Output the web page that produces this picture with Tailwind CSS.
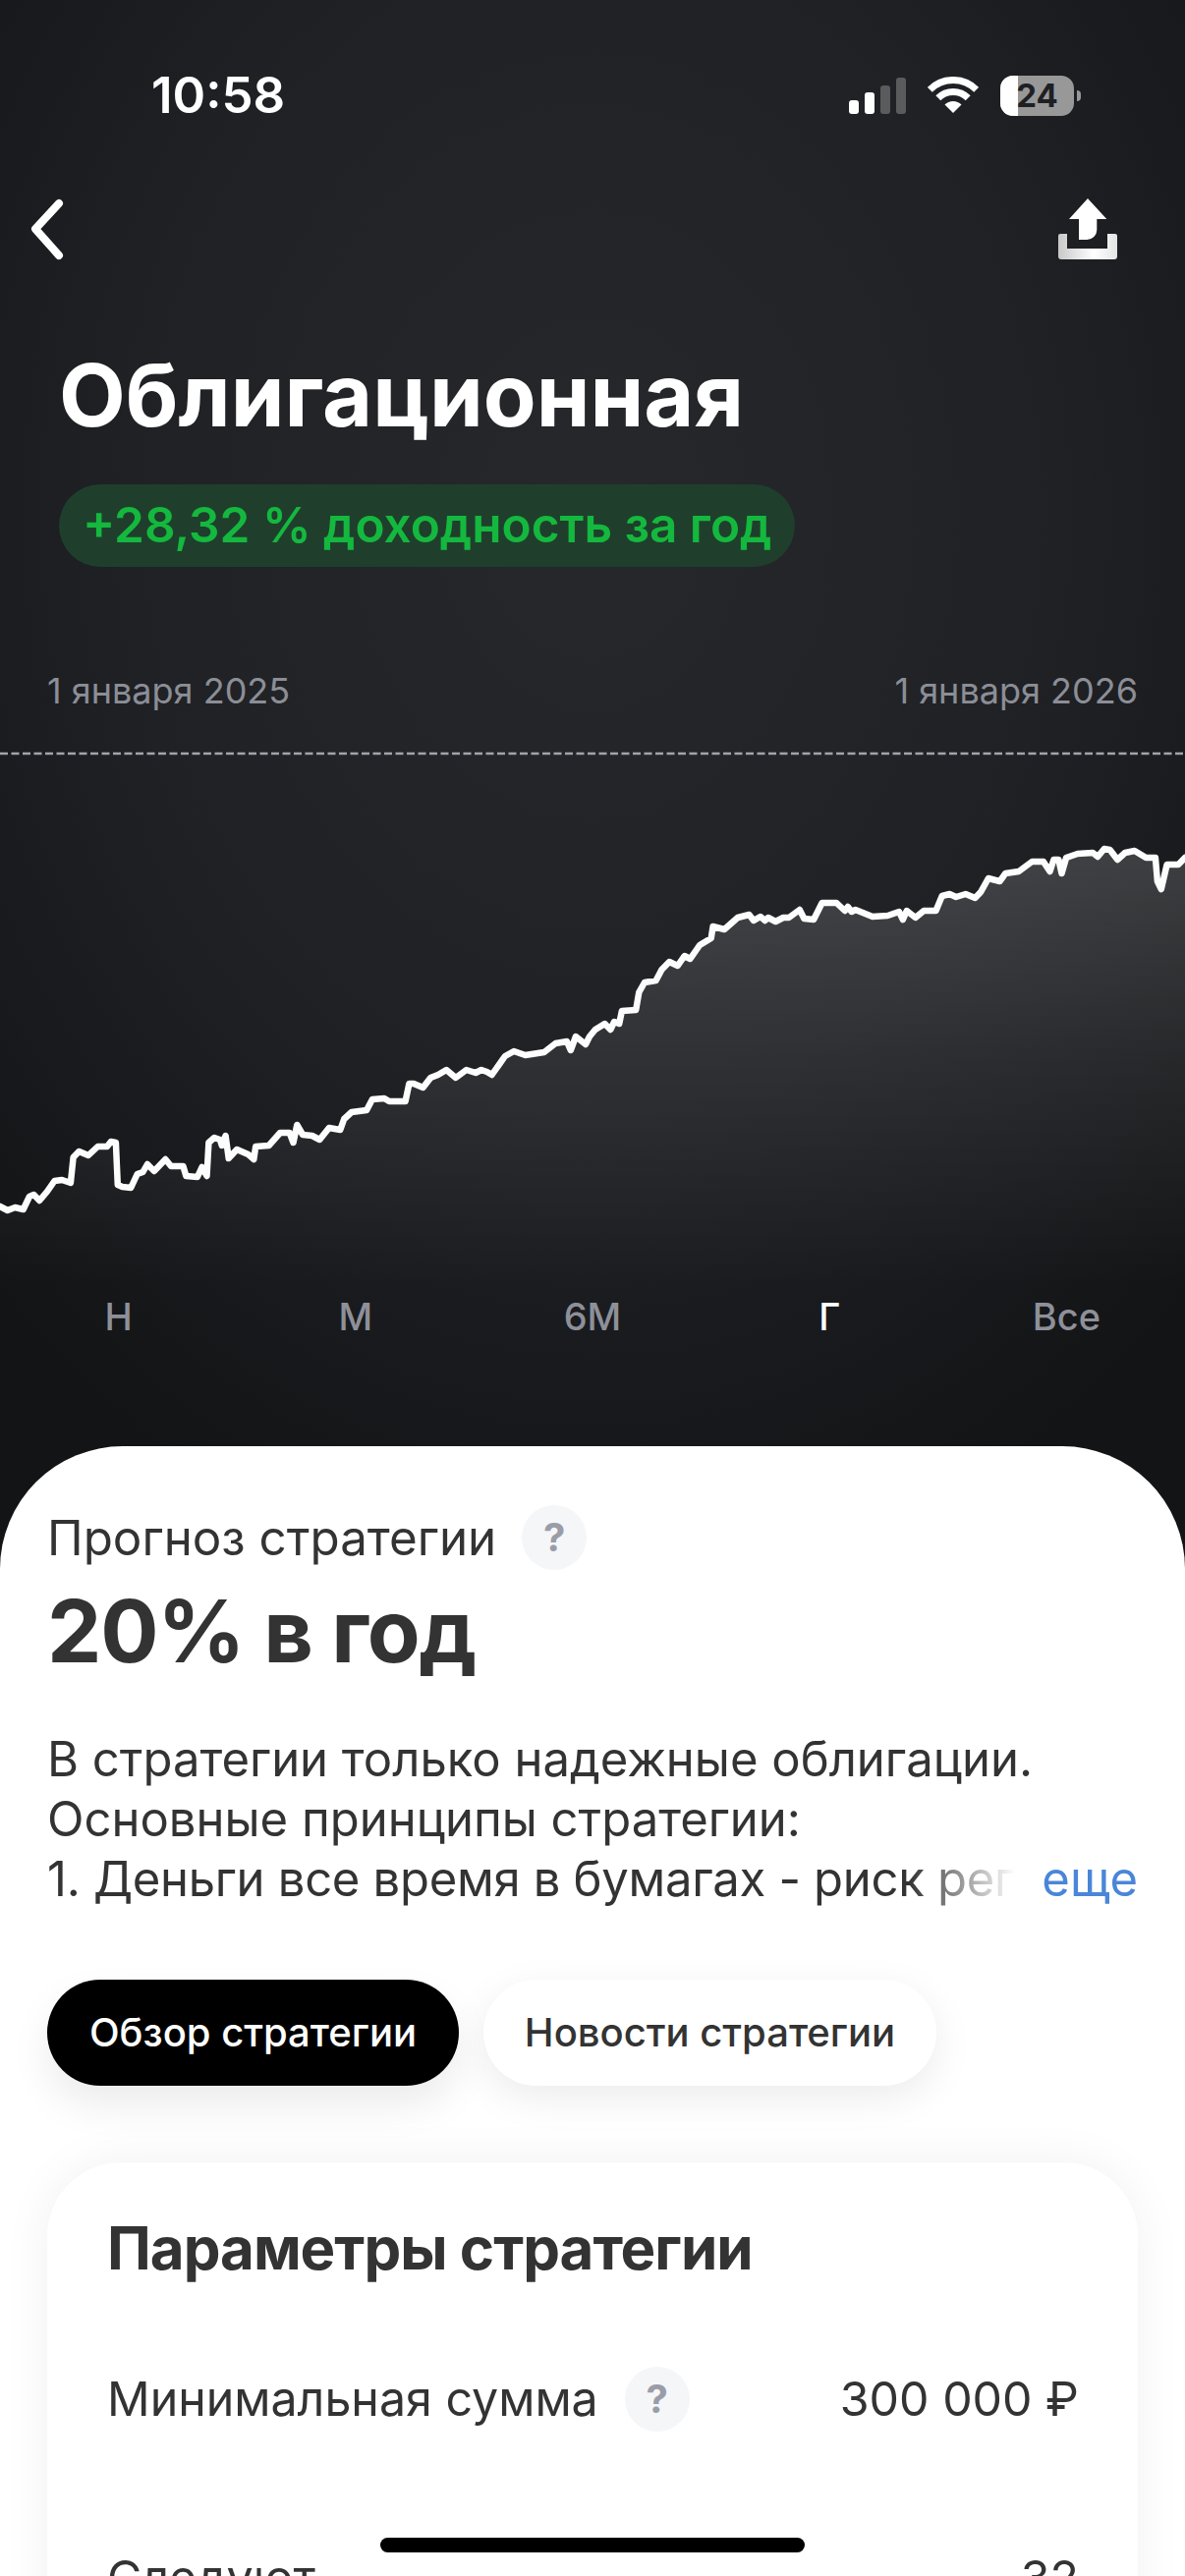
<!DOCTYPE html>
<html lang="ru">
<head>
<meta charset="utf-8">
<script src="https://cdn.jsdelivr.net/npm/@tailwindcss/browser@4"></script>
</head>
<body class="m-0">
<div class="relative w-[1206px] h-[2622px] overflow-hidden flex flex-col font-['Inter',sans-serif] bg-[radial-gradient(ellipse_72%_42%_at_50%_20%,#26282c_0%,#1f2125_55%,#131416_100%)]">

  <div class="flex items-center justify-between h-[54px] mt-[70px] pl-[154px] pr-[106px] shrink-0">
    <span class="text-white text-[51px] leading-[54px] font-semibold">10:58</span>
    <div class="flex items-center gap-[22px]">
      <div class="flex items-end gap-[6px] h-[37px]">
        <div class="w-[10px] h-[14px] rounded-[3px] bg-white"></div>
        <div class="w-[10px] h-[22px] rounded-[3px] bg-white"></div>
        <div class="w-[10px] h-[29px] rounded-[3px] bg-[#5a5b5d]"></div>
        <div class="w-[10px] h-[37px] rounded-[3px] bg-[#5a5b5d]"></div>
      </div>
      <svg width="52" height="38" viewBox="0 0 52 38" fill="none">
        <path d="M2.3 13.3A33.5 33.5 0 0 1 49.7 13.3" stroke="#fff" stroke-width="7"/>
        <path d="M10.8 21.8A21.5 21.5 0 0 1 41.2 21.8" stroke="#fff" stroke-width="7"/>
        <path d="M26 37L17.5 28.5A12 12 0 0 1 34.5 28.5Z" fill="#fff"/>
      </svg>
      <div class="flex items-center gap-[3px]">
        <div class="relative w-[75px] h-[41px] rounded-[13px] overflow-hidden flex bg-[#989898]">
          <div class="w-[18px] h-full bg-white"></div>
          <span class="absolute inset-0 flex items-center justify-center text-[33px] leading-none font-bold text-[#1e2024]">24</span>
        </div>
        <div class="w-[4px] h-[11px] rounded-r-[4px] bg-[#989898]"></div>
      </div>
    </div>
  </div>

  <div class="flex items-center justify-between h-[64px] mt-[77px] pl-[28px] pr-[68px] shrink-0">
    <svg width="40" height="64" viewBox="0 0 40 64" fill="none">
      <path d="M32 6L8 32L32 59" stroke="#fff" stroke-width="8" stroke-linecap="round" stroke-linejoin="round"/>
    </svg>
    <svg width="62" height="62" viewBox="0 0 62 62">
      <defs><linearGradient id="tray" x1="0" y1="0" x2="1" y2="0"><stop offset="0" stop-color="#c8c8c8"/><stop offset="0.6" stop-color="#ffffff"/><stop offset="1" stop-color="#e4e4e4"/></linearGradient></defs>
      <path d="M1 38a2 2 0 0 1 2-2h7v15h41V36h8a2 2 0 0 1 2 2v21a3 3 0 0 1-3 3H4a3 3 0 0 1-3-3Z" fill="url(#tray)"/>
      <path d="M31 0L50.300 21H40.300V32a10 10 0 0 1-10 10H22V21H12Z" fill="#fff"/>
    </svg>
  </div>

  <h1 class="mt-[87px] pl-[60px] text-[88px] leading-[100px] font-bold text-white shrink-0">Облигационная</h1>

  <div class="mt-[41px] ml-[60px] h-[84px] w-fit px-[24px] rounded-full bg-[#1f3f2c] flex items-center shrink-0">
    <span class="text-[49.500px] leading-none font-semibold text-[#14b83e] whitespace-nowrap">+28,32 % доходность за год</span>
  </div>

  <div class="mt-[102px] flex justify-between px-[48px] text-[36px] leading-[48px] text-[#8c8e96] shrink-0">
    <span>1 января 2025</span>
    <span>1 января 2026</span>
  </div>

  <svg class="block mt-[33px] shrink-0" width="1206" height="555" viewBox="0 760 1206 555" fill="none">
    <defs>
      <linearGradient id="area" gradientUnits="userSpaceOnUse" x1="0" y1="880" x2="0" y2="1310">
        <stop offset="0" stop-color="#ffffff" stop-opacity="0.15"/>
        <stop offset="0.45" stop-color="#ffffff" stop-opacity="0.07"/>
        <stop offset="1" stop-color="#ffffff" stop-opacity="0"/>
      </linearGradient>
    </defs>
    <line x1="0" y1="767" x2="1206" y2="767" stroke="#a2a4ac" stroke-width="2.500" stroke-dasharray="8 3.500"/>
    <path fill="url(#area)" d="M0 1228L7.700 1232L15.300 1229L23.700 1231L29.900 1218L34.400 1216L40.200 1222L47.800 1213L55.500 1202L63.100 1201L71.900 1204L74.600 1178L80.400 1172L89.900 1176L99.500 1167L109 1167L112.900 1162L117.900 1163L119.800 1206L124.400 1208L133.200 1209L139.700 1195L145.400 1193L150 1185L156.900 1192L168.400 1180L174.100 1187L179.900 1187L186.400 1187L189.400 1197L200.900 1198L205.500 1188L210.500 1197L212.400 1163L218.100 1158L223.900 1160L225.800 1166L229.600 1156L232.700 1179L241.100 1170L252.600 1175L258.300 1180L260.200 1167L273.600 1166L285.100 1153L294.700 1153L298.500 1163L302.300 1145L308.100 1155L317.600 1156L325.300 1160L334.900 1148L346.300 1150L350.200 1139L357.800 1132L373.100 1130L378.900 1119L391.100 1118L396.100 1121L412.600 1121L416.400 1103L421 1103L430.500 1107L438.200 1097L445.800 1094L454.300 1089L463.800 1097L474.600 1089L484.100 1092L489.900 1089L495.600 1091L500.600 1094L514 1075L523 1070L534.600 1074L553.800 1071L565.400 1062L576.900 1060L580.800 1069L586 1055L596 1063L600 1055L605.800 1048L615.500 1042L621.300 1048L625.100 1040L630.200 1042L632.900 1029L647.200 1028L650.300 1010L656 1000L667.600 998L673.400 987L681.200 979L689.700 983L696.600 973L702.400 976L712.100 962L723.700 955L725.600 943L737.200 946L750.800 934L762.400 931L767 937L773.900 933L778.600 937L781.700 934L789.400 938L797.100 934L802.900 934L813.800 926L818.400 935L828.100 936L836.600 919L851.300 919L859.800 927L862.900 923L866.700 928L870.600 926L888 933L903.400 932L915 928L918.900 936L922.800 927L931.700 934L940.200 927L952.500 927L958.700 912L966.400 910L973 913L982.700 910L992.400 914L998.100 908L1005.900 894L1017.500 897L1023.300 889L1036.800 887L1050.300 877L1061.900 877L1068.500 887L1072.400 875L1077.400 875L1080.500 889L1085.100 873L1096.700 869L1112.200 868L1117.200 872L1123.800 864L1129.600 865L1137.300 875L1145 868L1154.700 866L1166.300 873L1175.900 873L1177.900 897L1181.800 905L1187.600 880L1199.200 880L1206 873L1206 1315L0 1315Z"/>
    <path stroke="#fdfdfd" stroke-width="6.500" stroke-linejoin="round" stroke-linecap="round" d="M0 1228L7.700 1232L15.300 1229L23.700 1231L29.900 1218L34.400 1216L40.200 1222L47.800 1213L55.500 1202L63.100 1201L71.900 1204L74.600 1178L80.400 1172L89.900 1176L99.500 1167L109 1167L112.900 1162L117.900 1163L119.800 1206L124.400 1208L133.200 1209L139.700 1195L145.400 1193L150 1185L156.900 1192L168.400 1180L174.100 1187L179.900 1187L186.400 1187L189.400 1197L200.900 1198L205.500 1188L210.500 1197L212.400 1163L218.100 1158L223.900 1160L225.800 1166L229.600 1156L232.700 1179L241.100 1170L252.600 1175L258.300 1180L260.200 1167L273.600 1166L285.100 1153L294.700 1153L298.500 1163L302.300 1145L308.100 1155L317.600 1156L325.300 1160L334.900 1148L346.300 1150L350.200 1139L357.800 1132L373.100 1130L378.900 1119L391.100 1118L396.100 1121L412.600 1121L416.400 1103L421 1103L430.500 1107L438.200 1097L445.800 1094L454.300 1089L463.800 1097L474.600 1089L484.100 1092L489.900 1089L495.600 1091L500.600 1094L514 1075L523 1070L534.600 1074L553.800 1071L565.400 1062L576.900 1060L580.800 1069L586 1055L596 1063L600 1055L605.800 1048L615.500 1042L621.300 1048L625.100 1040L630.200 1042L632.900 1029L647.200 1028L650.300 1010L656 1000L667.600 998L673.400 987L681.200 979L689.700 983L696.600 973L702.400 976L712.100 962L723.700 955L725.600 943L737.200 946L750.800 934L762.400 931L767 937L773.900 933L778.600 937L781.700 934L789.400 938L797.100 934L802.900 934L813.800 926L818.400 935L828.100 936L836.600 919L851.300 919L859.800 927L862.900 923L866.700 928L870.600 926L888 933L903.400 932L915 928L918.900 936L922.800 927L931.700 934L940.200 927L952.500 927L958.700 912L966.400 910L973 913L982.700 910L992.400 914L998.100 908L1005.900 894L1017.500 897L1023.300 889L1036.800 887L1050.300 877L1061.900 877L1068.500 887L1072.400 875L1077.400 875L1080.500 889L1085.100 873L1096.700 869L1112.200 868L1117.200 872L1123.800 864L1129.600 865L1137.300 875L1145 868L1154.700 866L1166.300 873L1175.900 873L1177.900 897L1181.800 905L1187.600 880L1199.200 880L1206 873"/>
  </svg>

  <div class="grid grid-cols-5 h-[50px] text-center text-[38px] leading-[50px] font-medium text-[#8e9099] shrink-0">
    <span>Н</span>
    <span>М</span>
    <span>6М</span>
    <span class="text-white">Г</span>
    <span>Все</span>
  </div>

  <div class="mt-[107px] flex-1 min-h-0 bg-white rounded-t-[125px] pt-[60px] text-[#333333]">
    <div class="flex items-center gap-[26px] pl-[48px] h-[66px]">
      <span class="text-[49.300px] leading-[66px]">Прогноз стратегии</span>
      <span class="w-[66px] h-[66px] rounded-full bg-[#f5f6f8] flex items-center justify-center text-[40px] font-bold text-[#9a9da8]">?</span>
    </div>
    <div class="mt-[12px] pl-[48px] text-[88px] leading-[100px] font-bold tracking-[-1.2px]">20% в год</div>

    <div class="mt-[50px] px-[48px] text-[49px] leading-[61px]">
      <div>В стратегии только надежные облигации.</div>
      <div>Основные принципы стратегии:</div>
      <div class="flex justify-between">
        <span class="whitespace-nowrap w-[985px] overflow-hidden tracking-[-0.3px] [mask-image:linear-gradient(to_right,black_89%,transparent_100%)]">1. Деньги все время в бумагах - риск рег</span>
        <span class="text-[#4a86d8]">еще</span>
      </div>
    </div>

    <div class="mt-[72px] pl-[48px] flex gap-[25px] text-[40px] leading-[108px] font-[550]">
      <div class="w-[419px] h-[108px] text-center rounded-full bg-black text-white shadow-[0_20px_40px_rgba(0,0,0,0.08)]">Обзор стратегии</div>
      <div class="w-[461px] h-[108px] text-center rounded-full bg-white shadow-[0_12px_40px_rgba(0,0,0,0.08)]">Новости стратегии</div>
    </div>

    <div class="mt-[78px] mx-[48px] h-[600px] bg-white rounded-[75px] pl-[61px] pr-[60px] pt-[52px] shadow-[0_0_50px_rgba(0,0,0,0.06)]">
      <div class="text-[60px] leading-[70px] font-bold tracking-[-1px]">Параметры стратегии</div>
      <div class="mt-[86px] flex items-center justify-between h-[66px] text-[48.300px] leading-[66px]">
        <div class="flex items-center gap-[27px]">
          <span>Минимальная сумма</span>
          <span class="w-[66px] h-[66px] rounded-full bg-[#f5f6f8] flex items-center justify-center text-[40px] font-bold text-[#9a9da8]">?</span>
        </div>
        <span>300 000 ₽</span>
      </div>
      <div class="mt-[116px] flex items-center justify-between h-[66px] text-[48.300px] leading-[66px]">
        <span>Следуют</span>
        <span>32</span>
      </div>
    </div>
  </div>

  <div class="absolute left-[387px] top-[2583px] w-[432px] h-[15px] rounded-full bg-black"></div>
</div>
</body>
</html>
